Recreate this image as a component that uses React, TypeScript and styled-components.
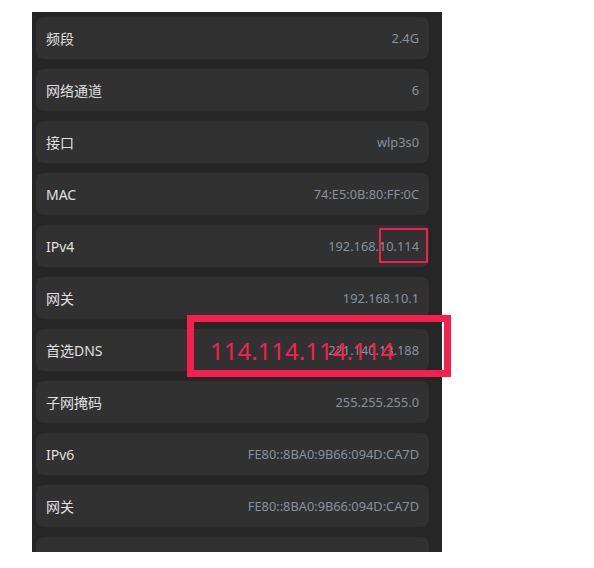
import React from "react";
import styled, { createGlobalStyle } from "styled-components";

const GlobalStyle = createGlobalStyle`
  html, body {
    margin: 0;
    padding: 0;
    background: #ffffff;
  }
  body {
    font-family: "Noto Sans", "Noto Sans CJK SC", sans-serif;
  }
`;

const Page = styled.div`
  position: relative;
  width: 594px;
  height: 568px;
  padding: 12px 0 0 32px;
  box-sizing: border-box;
`;

const Panel = styled.div`
  width: 410px;
  height: 540px;
  background: #262626;
  overflow: hidden;
  padding: 5px 13px 0 4px;
  box-sizing: border-box;
  display: flex;
  flex-direction: column;
  gap: 10px;
`;

const Row = styled.div`
  flex: 0 0 42px;
  height: 42px;
  border-radius: 8px;
  background: #313131;
  padding: 0 10px;
  box-sizing: border-box;
  display: flex;
  align-items: center;
  justify-content: space-between;
`;

const Label = styled.span`
  font-size: 14px;
  color: #e0e0e0;
`;

const Value = styled.span`
  font-size: 12.8px;
  color: #8592a0;
`;

const Mark = styled.div<{ $thick: number }>`
  position: absolute;
  box-sizing: border-box;
  border: ${(p) => p.$thick}px solid #f5214c;
  pointer-events: none;
`;

const BigNote = styled.span`
  display: block;
  padding: 13px 0 0 16px;
  font-family: "Noto Sans", sans-serif;
  font-size: 24px;
  line-height: 32px;
  color: #f5214c;
  white-space: nowrap;
`;

const rows: [string, string][] = [
  ["频段", "2.4G"],
  ["网络通道", "6"],
  ["接口", "wlp3s0"],
  ["MAC", "74:E5:0B:80:FF:0C"],
  ["IPv4", "192.168.10.114"],
  ["网关", "192.168.10.1"],
  ["首选DNS", "221.140.13.188"],
  ["子网掩码", "255.255.255.0"],
  ["IPv6", "FE80::8BA0:9B66:094D:CA7D"],
  ["网关", "FE80::8BA0:9B66:094D:CA7D"],
  ["前缀", "64"],
];

export default function App() {
  return (
    <>
      <GlobalStyle />
      <Page>
        <Panel>
          {rows.map(([k, v], i) => (
            <Row key={i}>
              <Label>{k}</Label>
              <Value>{v}</Value>
            </Row>
          ))}
        </Panel>
        <Mark $thick={2} style={{ left: 379, top: 228, width: 49, height: 35 }} />
        <Mark $thick={7} style={{ left: 187, top: 315, width: 264, height: 62 }}>
          <BigNote>114.114.114.114</BigNote>
        </Mark>
      </Page>
    </>
  );
}
